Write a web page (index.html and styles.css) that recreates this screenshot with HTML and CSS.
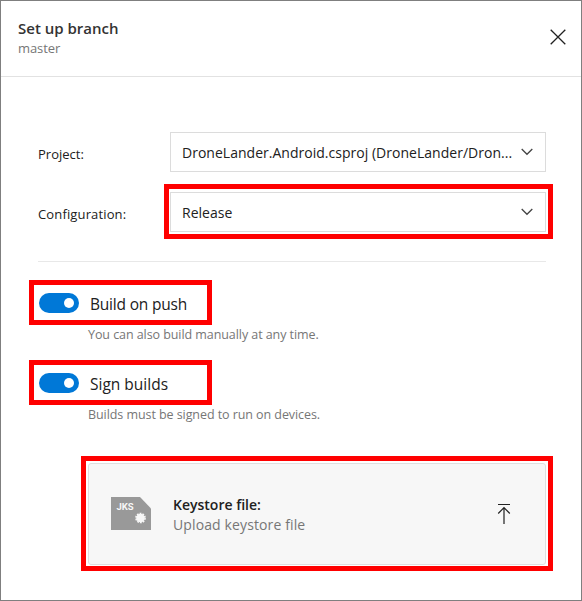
FILE: index.html
```html
<!DOCTYPE html>
<html lang="en">
<head>
<meta charset="utf-8">
<title>Set up branch</title>
<link rel="stylesheet" href="styles.css">
</head>
<body>
<main class="panel">
  <header class="header">
    <div>
      <h1 class="title">Set up branch</h1>
      <p class="branch"><span>master</span></p>
    </div>
    <svg class="close" width="16" height="16" viewBox="0 0 16 16"><path d="M.7.7l14.6 14.6M15.3.7L.7 15.3"/></svg>
  </header>
  <div class="content">
    <div class="field">
      <span class="label project">Project:</span>
      <div class="select">
        <span class="value file">DroneLander.Android.csproj (DroneLander/Dron...</span>
        <svg class="chevron" width="12" height="8" viewBox="0 0 12 8"><path d="M.7 1l5.3 5.3L11.3 1"/></svg>
      </div>
    </div>
    <div class="field">
      <span class="label config">Configuration:</span>
      <div class="select marked">
        <span class="value release">Release</span>
        <svg class="chevron" width="12" height="8" viewBox="0 0 12 8"><path d="M.7 1l5.3 5.3L11.3 1"/></svg>
      </div>
    </div>
    <hr class="divider">
    <section class="option">
      <div class="option-row marked"><span class="toggle"></span><span class="option-name push">Build on push</span></div>
      <p class="hint manual">You can also build manually at any time.</p>
    </section>
    <section class="option">
      <div class="option-row marked"><span class="toggle"></span><span class="option-name sign">Sign builds</span></div>
      <p class="hint devices">Builds must be signed to run on devices.</p>
    </section>
    <div class="keystore marked">
      <svg class="jks" width="40" height="33" viewBox="0 0 40 33">
        <path fill="#999" d="M0 0h29l11 11.500V33H0z"/>
        <text x="5.500" y="13.300" textLength="17">JKS</text>
        <circle cx="29.500" cy="21" r="4.300" fill="#f7f7f7"/>
        <circle cx="29.500" cy="21" r="4.600" fill="none" stroke="#f7f7f7" stroke-width="1.500" stroke-dasharray="1.800 1.090"/>
      </svg>
      <div class="keystore-text">
        <div class="keystore-title">Keystore file:</div>
        <div class="keystore-sub">Upload keystore file</div>
      </div>
      <svg class="upload" width="14" height="21" viewBox="0 0 14 21"><path d="M1 1.500h12M7 4.500v16.500M1.200 10.500L7 4.700 12.800 10.500"/></svg>
    </div>
  </div>
</main>
</body>
</html>
```

FILE: styles.css
```css
* { box-sizing: border-box; }
body { margin: 0; background: #fff; font-family: "Open Sans", "Noto Sans", sans-serif; color: #212121; }
h1, p { margin: 0; }
.panel { width: 582px; height: 601px; border: 1px solid #7f7f7f; overflow: hidden; }
.header { display: flex; justify-content: space-between; height: 76px; padding: 16px 15px 0 17px; border-bottom: 1px solid #e2e2e2; }
.title { font-size: 15px; line-height: 22px; font-weight: 600; color: #333; white-space: nowrap; }
.branch { font-size: 13px; line-height: 18px; letter-spacing: -.1px; color: #767676; }
.close { margin-top: 12px; fill: none; stroke: #212121; stroke-width: 1.3; }
.content { padding: 55px 35px 0 37px; }
.field { display: flex; height: 40px; margin-bottom: 20px; }
.label { width: 132px; flex: none; padding-top: 3px; font-size: 13px; line-height: 38px; white-space: nowrap; }
.config { letter-spacing: .14px; }
.select { display: flex; align-items: center; justify-content: space-between; width: 376px; padding: 0 12px 0 11px; border: 1px solid #dcdcdc; }
.value { font-size: 14px; line-height: 38px; padding-top: 1px; letter-spacing: .02px; white-space: nowrap; }
.chevron { fill: none; stroke: #444; stroke-width: 1.3; }
.marked { position: relative; }
.marked::after { content: ""; position: absolute; border: 5px solid #f00; }
.select.marked::after { inset: -9px -8px -8px -7px; }
.divider { height: 1px; margin: 29px 0 18px; border: 0; background: #e8e8e8; }
.option { height: 80px; }
.option-row { display: flex; width: 168px; height: 45px; padding: 13px 0 0 1px; }
.option-row::after { inset: 0 -6px 0 -9px; }
.toggle { width: 40px; height: 20px; padding: 5px; border-radius: 10px; background: #0078d7; }
.toggle::after { content: ""; display: block; width: 10px; height: 10px; margin-left: 20px; border-radius: 50%; background: #fff; }
.option-name { margin-left: 11px; font-size: 15.5px; line-height: 22px; white-space: nowrap; }
.push { letter-spacing: -.2px; }
.hint { padding: 1px 0 0 50px; font-size: 12.5px; line-height: 18px; letter-spacing: -.07px; color: #767676; white-space: nowrap; }
.keystore { display: flex; align-items: flex-start; width: 458px; height: 102px; margin: 23px 0 0 50px; padding: 33px 34px 0 22px; border: 1px solid #dfdfdf; border-radius: 3px; background: #f7f7f7; }
.keystore::after { inset: -8px -8px -7px -8px; }
.jks { flex: none; }
.jks text { font: bold 9.5px Roboto, sans-serif; fill: #f7f7f7; }
.keystore-text { flex: 1; margin: -3px 0 0 22px; white-space: nowrap; }
.keystore-title { font-size: 14px; line-height: 22px; font-weight: 600; }
.keystore-sub { font-size: 14px; line-height: 18px; letter-spacing: .12px; color: #767676; }
.upload { margin-top: 6px; fill: none; stroke: #212121; stroke-width: 1.2; }
```
